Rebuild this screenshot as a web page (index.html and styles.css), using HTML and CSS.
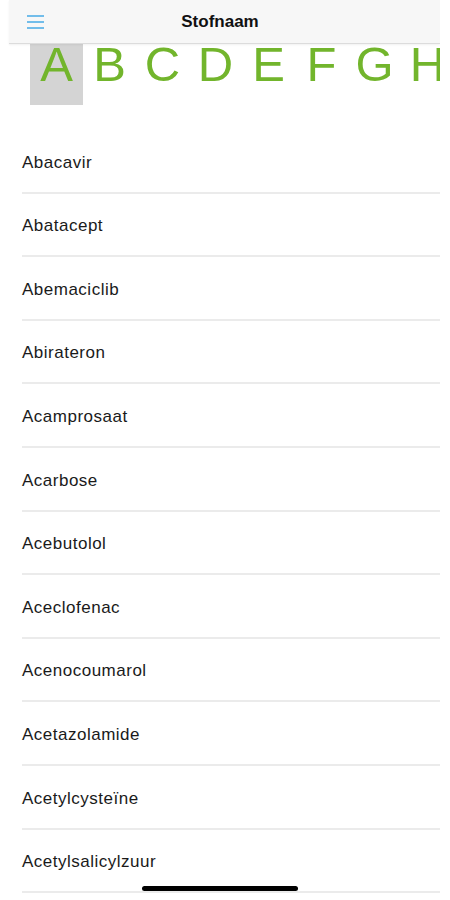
FILE: index.html
```html
<!DOCTYPE html>
<html lang="nl">
<head>
  <meta charset="UTF-8" />
  <meta name="viewport" content="width=device-width, initial-scale=1.0"/>
  <title>Stofnaam</title>
  <link rel="stylesheet" href="styles.css">
</head>
<body>

  <div class="app">

    <!-- Bovenbalk -->
    <header class="topbar">
      <button class="menu-btn" aria-label="Menu">
        <svg width="17" height="14" viewBox="0 0 17 14">
          <path d="M0 1h17M0 7h17M0 13h17" stroke="#72bdea" stroke-width="2" fill="none"/>
        </svg>
      </button>
      <h1 class="title">Stofnaam</h1>
    </header>

    <!-- Alfabet (schuift onder de bovenbalk door) -->
    <nav class="letters">
      <a class="letter active">A</a>
      <a class="letter">B</a>
      <a class="letter">C</a>
      <a class="letter">D</a>
      <a class="letter">E</a>
      <a class="letter">F</a>
      <a class="letter">G</a>
      <a class="letter">H</a>
    </nav>

    <!-- Lijst met stoffen -->
    <ul class="list">
      <li class="item">Abacavir</li>
      <li class="item">Abatacept</li>
      <li class="item">Abemaciclib</li>
      <li class="item">Abirateron</li>
      <li class="item">Acamprosaat</li>
      <li class="item">Acarbose</li>
      <li class="item">Acebutolol</li>
      <li class="item">Aceclofenac</li>
      <li class="item">Acenocoumarol</li>
      <li class="item">Acetazolamide</li>
      <li class="item">Acetylcysteïne</li>
      <li class="item">Acetylsalicylzuur</li>
    </ul>

    <div class="home-bar"></div>
  </div>

</body>
</html>
```

FILE: styles.css
```css
/* Basis */
* {
  margin: 0;
  padding: 0;
  box-sizing: border-box;
}

body {
  font-family: "Liberation Sans", Arial, sans-serif;
  background: #fff;
  color: #1a1a1a;
  height: 900px;
  overflow: hidden;
}

.app {
  position: relative;
  width: 440px;
  height: 900px;
  overflow: hidden;
}

/* Bovenbalk */
.topbar {
  height: 44px;
  margin-left: 9px;
  padding-right: 9px;
  background: #f7f7f7;
  border-bottom: 1px solid #dcdcdc;
  box-shadow: 0 1px 2px rgba(0, 0, 0, 0.06);
  display: flex;
  align-items: center;
  position: relative;
  z-index: 2;
}

.menu-btn {
  border: none;
  background: none;
  width: 17px;
  height: 14px;
  margin-left: 18px;
  display: flex;
}

.title {
  position: absolute;
  left: 0;
  right: 9px;
  text-align: center;
  font-size: 17px;
  font-weight: bold;
  color: #111;
}

/* Alfabet */
.letters {
  display: flex;
  margin-top: -8px;
  padding-left: 30px;
}

.letter {
  flex-shrink: 0;
  width: 53px;
  height: 69px;
  text-align: center;
  font-size: 49px;
  line-height: normal;
  color: #72b52c;
}

.letter.active {
  background: #d4d4d4;
}

/* Lijst */
.list {
  list-style: none;
  margin-top: 25px;
  padding-left: 22px;
}

.item {
  height: 63.6px;
  padding-top: 22.6px;
  font-size: 17px;
  line-height: 20px;
  letter-spacing: 0.5px;
  border-bottom: 2px solid #ebebeb;
}

/* Home-indicator */
.home-bar {
  position: absolute;
  left: 142px;
  top: 886px;
  width: 156px;
  height: 5px;
  border-radius: 3px;
  background: #000;
}
```
